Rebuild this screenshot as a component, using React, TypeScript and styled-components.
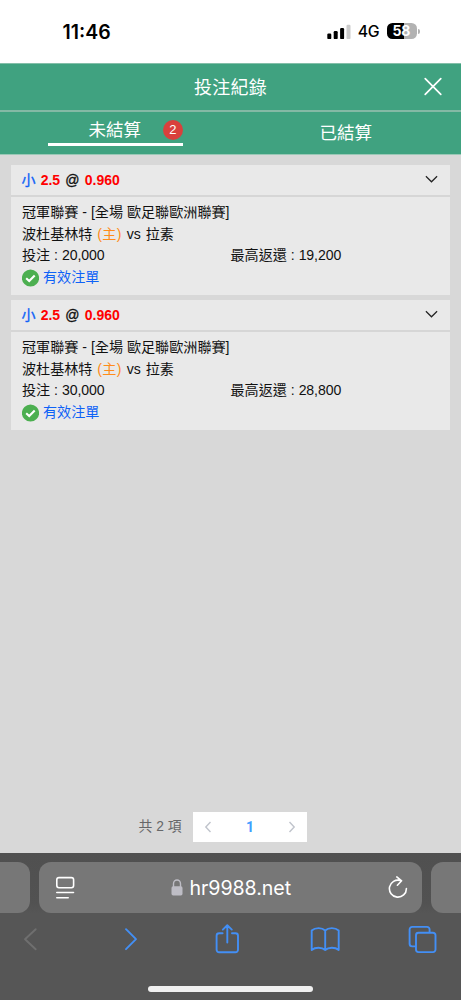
import React from 'react';
import styled, { createGlobalStyle } from 'styled-components';

const Global = createGlobalStyle`
  * { box-sizing: border-box; }
  body { margin: 0; background: #d8d8d8; }
  svg { display: block; flex: none; }
`;

const Screen = styled.div`
  width: 461px;
  height: 1000px;
  display: flex;
  flex-direction: column;
  overflow: hidden;
  background: #d8d8d8;
  color: #111;
  font-family: "Liberation Sans", "Noto Sans CJK TC", sans-serif;
`;

const StatusBar = styled.header`
  height: 63px;
  flex: none;
  display: flex;
  align-items: center;
  justify-content: space-between;
  padding: 0 41px 0 62.5px;
  background: #fff;
  color: #000;
  font-family: Inter, sans-serif;
`;

const Clock = styled.span`
  font-size: 19.5px;
  font-weight: 600;
  letter-spacing: 0;
`;

const StatusIcons = styled.div`
  display: flex;
  align-items: center;
  height: 20px;
`;

const Network = styled.span`
  margin-left: 7px;
  width: 29px;
  font-size: 15.8px;
  font-weight: 450;
  letter-spacing: -0.2px;
  line-height: 22px;
`;

const Battery = styled.span`
  width: 30.5px;
  height: 16px;
  margin-top: -1px;
  padding-right: 1px;
  border-radius: 5.5px;
  background: linear-gradient(90deg, #000 58%, #b2b2b2 58%);
  color: #fff;
  font-size: 14px;
  font-weight: 700;
  line-height: 16.5px;
  text-align: center;
`;

const BatteryTip = styled.span`
  width: 1.8px;
  height: 5px;
  margin-left: 1px;
  border-radius: 0 2px 2px 0;
  background: #b2b2b2;
`;

const TitleBar = styled.div`
  height: 49px;
  flex: none;
  display: grid;
  grid-template-columns: 28px 1fr 28px;
  align-items: center;
  padding: 0 14px;
  background: #40a280;
  border-top: 1px solid #84bfa9;
  border-bottom: 2px solid #84b9a5;
  color: #fff;
`;

const Title = styled.h1`
  grid-column: 2;
  margin: 0;
  padding-top: 1px;
  font-size: 18px;
  font-weight: 400;
  letter-spacing: 0.3px;
  line-height: 26px;
  text-align: center;
`;

const Tabs = styled.nav`
  height: 43px;
  flex: none;
  display: grid;
  grid-template-columns: 1fr 1fr;
  background: #40a280;
  border-bottom: 1px solid #9ac8b6;
  color: #fff;
  font-size: 17.5px;
`;

const Tab = styled.div`
  display: flex;
  justify-content: center;
  align-items: center;
  line-height: 26px;
`;

const ActiveLabel = styled.div`
  position: relative;
  width: 135px;
  height: 34px;
  margin-top: -8px;
  padding-right: 1px;
  border-bottom: 3px solid #fff;
  text-align: center;
  line-height: 36px;
`;

const CountBadge = styled.span`
  position: absolute;
  right: 0;
  top: 8px;
  width: 20px;
  height: 20px;
  border-radius: 50%;
  background: #d9403c;
  font-size: 13px;
  line-height: 20px;
`;

const BetList = styled.main`
  flex: 1;
  display: flex;
  flex-direction: column;
  gap: 5px;
  padding: 10px 11px 0 11px;
`;

const Card = styled.article`
  background: #e9e9e9;
  font-size: 14.1px;
`;

const CardHead = styled.div`
  height: 32px;
  display: flex;
  align-items: center;
  justify-content: space-between;
  padding: 0 12px 0 10.5px;
  border-bottom: 2px solid #d6d6d6;
`;

const Odds = styled.div`
  display: flex;
  gap: 5.3px;
  font-size: 14px;
  font-weight: 700;
  line-height: 20px;
  letter-spacing: -0.05px;
`;

const Tone = styled.span<{ $color: string }>`
  color: ${(p) => p.$color};
`;

const Pick = styled(Tone)`
  font-weight: 400;
  -webkit-text-stroke: 0.35px currentColor;
`;

const AtSign = styled.span`
  font-weight: 400;
  -webkit-text-stroke: 0.35px #111;
`;

const CardBody = styled.div`
  height: 98px;
  padding: 5px 11px 0;
`;

const Line = styled.div`
  height: 21.5px;
  display: flex;
  align-items: center;
  line-height: 21px;
  white-space: pre;
`;

const Teams = styled(Line)`
  gap: 4.8px;
`;

const Home = styled(Tone)`
  letter-spacing: 0.4px;
`;

const Half = styled.span`
  width: 50%;
`;

const Amount = styled.span`
  letter-spacing: -0.1px;
`;

const Valid = styled(Line)`
  height: 22px;
  gap: 4px;
  color: #0e62f7;
`;

const Pager = styled.footer`
  height: 41px;
  flex: none;
  display: flex;
  align-items: flex-start;
  padding-left: 138.5px;
  gap: 10.5px;
`;

const Total = styled.span`
  font-size: 13.8px;
  line-height: 30px;
  color: #666769;
  width: 44px;
  white-space: nowrap;
`;

const Pages = styled.div`
  width: 114px;
  height: 30px;
  display: flex;
  align-items: center;
  justify-content: space-between;
  padding: 0 11px;
  background: #fff;
`;

const Page = styled.span`
  color: #409eff;
  font-family: Roboto, sans-serif;
  font-size: 14px;
  font-weight: 700;
`;

const Browser = styled.section`
  height: 147px;
  flex: none;
  display: flex;
  flex-direction: column;
  background: #565656;
  color: #fff;
`;

const AddressRow = styled.div`
  display: flex;
  gap: 9px;
  height: 60px;
  padding-top: 9px;
  background: linear-gradient(#505050, #525252 85%, #565656);
`;

const SideTab = styled.div<{ $side: 'left' | 'right' }>`
  width: 30px;
  height: 51px;
  flex: none;
  background: #777;
  border-radius: ${(p) => (p.$side === 'left' ? '0 12px 12px 0' : '12px 0 0 12px')};
`;

const Address = styled.div`
  flex: 1;
  height: 51px;
  display: flex;
  align-items: center;
  justify-content: space-between;
  padding: 0 14px 0 16px;
  border-radius: 12px;
  background: #777;
`;

const Domain = styled.div`
  display: flex;
  align-items: center;
  gap: 6px;
  margin-right: 0.5px;
  font-family: Inter, sans-serif;
  font-size: 19.6px;
  line-height: 26px;
  letter-spacing: -0.05px;
`;

const Toolbar = styled.div`
  height: 52px;
  display: flex;
  align-items: center;
  justify-content: space-between;
  padding: 0 22px 0 15px;
`;

const HomeIndicator = styled.div`
  width: 165px;
  height: 6px;
  margin: 21px auto 0;
  border-radius: 3px;
  background: #f0f0f0;
`;

const SignalIcon = () => (
  <svg width="24" height="16" viewBox="0 0 24 16">
    <rect x="0.3" y="9.6" width="4" height="5.5" rx="1.2" fill="#000" />
    <rect x="6.7" y="7.1" width="4" height="8" rx="1.2" fill="#000" />
    <rect x="13.1" y="4" width="4" height="11.1" rx="1.2" fill="#000" />
    <rect x="19.5" y="0.7" width="4" height="14.4" rx="1.2" fill="#cbcbcb" />
  </svg>
);

const CloseIcon = () => (
  <svg width="28" height="28" viewBox="0 0 28 28" fill="none" stroke="#fff" strokeWidth="1.7" strokeLinecap="round">
    <path d="M6.2 5.7 21.8 21.3M21.8 5.7 6.2 21.3" />
  </svg>
);

const ChevronDown = () => (
  <svg width="14" height="14" viewBox="0 0 14 14" fill="none" stroke="#222" strokeWidth="1.2">
    <path d="M1.9 3.3 7.5 8.8 13.1 3.3" />
  </svg>
);

const CheckIcon = () => (
  <svg width="17" height="18" viewBox="0 0 17 18">
    <circle cx="8.5" cy="9" r="8.6" fill="#4caf50" />
    <path d="M4.2 9.2 7.2 12 12.7 6.4" fill="none" stroke="#fff" strokeWidth="2.1" />
  </svg>
);

const PageArrow = ({ d }: { d: string }) => (
  <svg width="10" height="12" viewBox="0 0 10 12" fill="none" stroke="#c0c4cc" strokeWidth="1.4">
    <path d={d} />
  </svg>
);

const ReaderIcon = () => (
  <svg width="20" height="24" viewBox="0 0 20 24" fill="none" stroke="#fff" strokeWidth="1.6" strokeLinecap="round">
    <rect x="1.8" y="1.6" width="16.8" height="10.2" rx="2.2" />
    <path d="M1.8 16.5H18.5M1.8 21.7H13.2" />
  </svg>
);

const LockIcon = () => (
  <svg width="12" height="17" viewBox="0 0 12 17">
    <path d="M2.5 8V4.7a3.5 3.7 0 0 1 7 0V8" fill="none" stroke="#bebdc5" strokeWidth="1.4" />
    <rect x="0.5" y="7.2" width="11" height="9.3" rx="1.7" fill="#bebdc5" />
  </svg>
);

const ReloadIcon = () => (
  <svg width="20" height="24" viewBox="0 0 20 24" fill="none" stroke="#fff" strokeWidth="1.6" strokeLinecap="round" strokeLinejoin="round">
    <path d="M18.4 12.6A8.5 8.5 0 1 1 12.4 4.5M8.8 0.9 13.6 4.8 9.4 9.2" />
  </svg>
);

const ToolIcon = ({ d, color = '#438ff5' }: { d: string; color?: string }) => (
  <svg width="32" height="32" viewBox="0 0 32 32" fill="none" stroke={color} strokeWidth="1.9" strokeLinecap="round" strokeLinejoin="round">
    <path d={d} />
  </svg>
);

const TOOLS = [
  { name: 'back', d: 'M20.7 6.2 10 16.2 20.7 26.2', color: '#6f6f6f' },
  { name: 'forward', d: 'M13 6.2 23 16.2 13 26.2' },
  {
    name: 'share',
    d: 'M11.6 10.3H8.1a2.5 2.5 0 0 0-2.5 2.5V26.8a2.5 2.5 0 0 0 2.5 2.5H24.5a2.5 2.5 0 0 0 2.5-2.5V12.8a2.5 2.5 0 0 0-2.5-2.5h-3.5M16.3 19.6V2.2M11.8 6.6 16.3 2.2 20.8 6.6',
  },
  {
    name: 'bookmarks',
    d: 'M16.2 7.5C13 4.3 6.2 4.3 2.7 7.5V27C6.2 24 13 24 16.2 27 19.4 24 26.2 24 29.7 27V7.5C26.2 4.3 19.4 4.3 16.2 7.5V27',
  },
  {
    name: 'tabs',
    d: 'M8.5 23.4H5.2a2.6 2.6 0 0 1-2.6-2.6V6.5a2.6 2.6 0 0 1 2.6-2.6H20a2.6 2.6 0 0 1 2.6 2.6V9.5M11.5 9.8H26a2.5 2.5 0 0 1 2.5 2.5V26.6a2.5 2.5 0 0 1-2.5 2.5H11.5a2.5 2.5 0 0 1-2.5-2.5V12.3a2.5 2.5 0 0 1 2.5-2.5Z',
  },
];

const BETS = [
  { stake: '20,000', payout: '19,200' },
  { stake: '30,000', payout: '28,800' },
];

export default function App() {
  return (
    <Screen>
      <Global />
      <StatusBar>
        <Clock>11:46</Clock>
        <StatusIcons>
          <SignalIcon />
          <Network>4G</Network>
          <Battery>58</Battery>
          <BatteryTip />
        </StatusIcons>
      </StatusBar>
      <TitleBar>
        <Title>投注紀錄</Title>
        <CloseIcon />
      </TitleBar>
      <Tabs>
        <Tab>
          <ActiveLabel>
            未結算<CountBadge>2</CountBadge>
          </ActiveLabel>
        </Tab>
        <Tab>已結算</Tab>
      </Tabs>
      <BetList>
        {BETS.map((bet) => (
          <Card key={bet.stake}>
            <CardHead>
              <Odds>
                <Pick $color="#0e62f7">小</Pick>
                <Tone $color="#ff0000">2.5</Tone>
                <AtSign>@</AtSign>
                <Tone $color="#ff0000">0.960</Tone>
              </Odds>
              <ChevronDown />
            </CardHead>
            <CardBody>
              <Line>冠軍聯賽 - [全場 歐足聯歐洲聯賽]</Line>
              <Teams>
                <span>波杜基林特</span>
                <Home $color="#ff8c1a">(主)</Home>
                <span>vs</span>
                <span>拉素</span>
              </Teams>
              <Line>
                <Half>
                  投注 : <Amount>{bet.stake}</Amount>
                </Half>
                <Half>
                  最高返還 : <Amount>{bet.payout}</Amount>
                </Half>
              </Line>
              <Valid>
                <CheckIcon />
                有效注單
              </Valid>
            </CardBody>
          </Card>
        ))}
      </BetList>
      <Pager>
        <Total>共 2 項</Total>
        <Pages>
          <PageArrow d="M6.5 1 1.8 6 6.5 11" />
          <Page>1</Page>
          <PageArrow d="M3.5 1 8.2 6 3.5 11" />
        </Pages>
      </Pager>
      <Browser>
        <AddressRow>
          <SideTab $side="left" />
          <Address>
            <ReaderIcon />
            <Domain>
              <LockIcon />
              hr9988.net
            </Domain>
            <ReloadIcon />
          </Address>
          <SideTab $side="right" />
        </AddressRow>
        <Toolbar>
          {TOOLS.map((tool) => (
            <ToolIcon key={tool.name} d={tool.d} color={tool.color} />
          ))}
        </Toolbar>
        <HomeIndicator />
      </Browser>
    </Screen>
  );
}
